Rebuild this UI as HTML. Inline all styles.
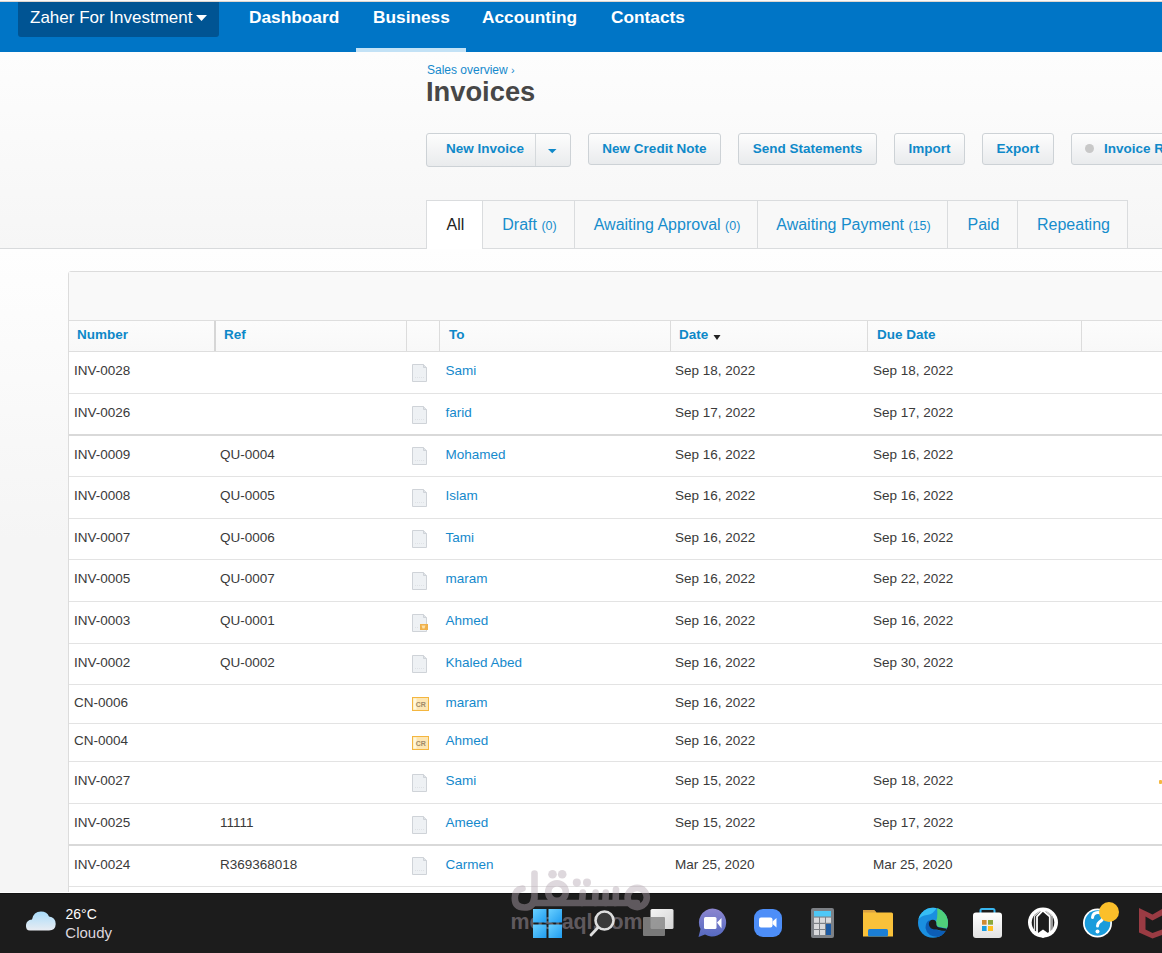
<!DOCTYPE html>
<html><head><meta charset="utf-8">
<style>
*{margin:0;padding:0;box-sizing:border-box}
html,body{width:1162px;height:953px;overflow:hidden;background:#fdfdfd;font-family:"Liberation Sans",sans-serif;position:relative}
.a{position:absolute;white-space:nowrap}
#topline{left:0;top:0;width:1162px;height:2px;background:linear-gradient(#fafafa 0,#fafafa 50%,#ddd5cf 50%)}
#nav{left:0;top:2px;width:1162px;height:50px;background:#0075c6}
#org{left:18px;top:2px;width:201px;height:35px;background:#005493;border-radius:0 0 3px 3px}
.navt{color:#fff;font-size:17px;line-height:20px;top:8px}
.navb{font-size:17.3px}
.navb{font-weight:bold;font-size:17.3px;margin-top:-0.6px}
#uline{left:356px;top:48px;width:110px;height:4px;background:#c3e2f6}
#hdr{left:0;top:52px;width:1162px;height:197px;background:linear-gradient(#fdfdfd,#f6f6f6)}
#hline{left:0;top:248px;width:1162px;height:1px;background:#d8dadc}
#gutter{left:0;top:249px;width:1162px;height:644px;background:linear-gradient(#fefefe 0,#f5f5f5 45%,#f5f5f5 100%)}
.crumb{left:427px;top:63px;font-size:12px;color:#1589cc}
#title{left:426px;top:77px;font-size:27.3px;font-weight:bold;color:#474747;line-height:30px}
.btn{position:absolute;top:133px;height:32px;border:1px solid #cdd2d6;border-radius:3px;background:linear-gradient(#fdfdfd,#e9ebed);color:#0f89c9;font-size:13.5px;font-weight:bold;line-height:30px;text-align:center;white-space:nowrap}
.tab{position:absolute;top:200px;height:49px;border:1px solid #dadcde;border-left:none;background:#f8f8f8;color:#178dcc;font-size:16px;line-height:47px;text-align:center;white-space:nowrap;text-indent:2px}
.tab small{font-size:12.5px}

#panel{left:68px;top:271px;width:1100px;height:630px;border:1px solid #dcdcdc;border-radius:3px 0 0 0;background:#fff}
#ptool{left:69px;top:272px;width:1093px;height:48px;background:#f9f9f9}
#thead{left:69px;top:320px;width:1093px;height:32px;border-top:1px solid #dedede;border-bottom:1px solid #dedede;background:linear-gradient(#fcfcfc,#f8f8f8)}
.th{position:absolute;top:327.4px;font-size:13.5px;font-weight:bold;color:#0d88c8;line-height:16px;white-space:nowrap}
.vd{position:absolute;top:321px;width:1px;height:30px;background:#dcdcdc}
.td{position:absolute;font-size:13.5px;color:#3a3a3a;line-height:16px;white-space:nowrap}
.lk{color:#1589cc}
.rl{left:69px;width:1093px;height:1px;background:#e3e3e3}
#taskbar{left:0;top:893px;width:1162px;height:60px;background:#1c1c1c;border-top:1px solid #121212}
#wrow{left:0;top:892px;width:1162px;height:1px;background:#fdfdfd}
</style></head><body>
<div class="a" id="topline"></div>
<div class="a" id="nav"></div>
<div class="a" id="org"></div>
<div class="a navt" style="left:30px">Zaher For Investment</div>
<svg class="a" style="left:196px;top:15px" width="11" height="6"><path d="M0 0H11L5.5 6Z" fill="#fff"/></svg>
<div class="a navt navb" style="left:249px">Dashboard</div>
<div class="a navt navb" style="left:373px">Business</div>
<div class="a navt navb" style="left:482px">Accounting</div>
<div class="a navt navb" style="left:611px">Contacts</div>
<div class="a" id="uline"></div>

<div class="a" id="hdr"></div>
<div class="a" id="gutter"></div>
<div class="a" id="hline"></div>
<div class="a crumb">Sales overview <span style="font-size:11px">›</span></div>
<div class="a" id="title">Invoices</div>

<div class="btn" style="left:426px;width:145px;height:34px"><span style="position:absolute;left:19px;top:0">New Invoice</span><span style="position:absolute;left:108px;top:0;width:1px;height:32px;background:#d5d9dc"></span><svg style="position:absolute;left:121px;top:15px" width="9" height="5"><path d="M0 0H8.5L4.25 4.2Z" fill="#0f89c9"/></svg></div>
<div class="btn" style="left:588px;width:133px">New Credit Note</div>
<div class="btn" style="left:738px;width:139px">Send Statements</div>
<div class="btn" style="left:894px;width:71px">Import</div>
<div class="btn" style="left:982px;width:72px">Export</div>
<div class="btn" style="left:1071px;width:120px;text-align:left"><span style="position:absolute;left:13px;top:10px;width:9px;height:9px;border-radius:50%;background:#c8c8c8"></span><span style="position:absolute;left:32px;top:0">Invoice Reminders</span></div>

<div class="tab" style="left:426px;width:57px;border-left:1px solid #dadcde;background:#fff;color:#222;border-bottom:none;height:49px">All</div>
<div class="tab" style="left:483px;width:92px">Draft <small>(0)</small></div>
<div class="tab" style="left:575px;width:183px">Awaiting Approval <small>(0)</small></div>
<div class="tab" style="left:758px;width:190px">Awaiting Payment <small>(15)</small></div>
<div class="tab" style="left:948px;width:70px">Paid</div>
<div class="tab" style="left:1018px;width:110px">Repeating</div>


<svg width="0" height="0" style="position:absolute">
<defs>
<g id="doc"><path d="M0.5 0.5H11.5L14.5 3.5V17.5H0.5Z" fill="#eef1f4" stroke="#cfd3d8"/><path d="M11.5 0.5V3.5H14.5" fill="#dfe3e7" stroke="#cfd3d8"/><path d="M3 13.5H12" stroke="#dfe2e6" stroke-dasharray="1 1"/></g>
<g id="docb"><path d="M0.5 0.5H11.5L14.5 3.5V17.5H0.5Z" fill="#eef1f4" stroke="#cfd3d8"/><path d="M11.5 0.5V3.5H14.5" fill="#dfe3e7" stroke="#cfd3d8"/><path d="M3 13.5H7" stroke="#dfe2e6" stroke-dasharray="1 1"/><rect x="8" y="10" width="8" height="6" fill="#efb14c"/><path d="M9.5 11.5H13.5L12.5 14.5H10.5Z" fill="#fde0a6"/></g>
<g id="cr"><rect x="0.5" y="0.5" width="16" height="13" fill="#fde6b3" stroke="#f4b63f"/><rect x="1.5" y="1.5" width="3" height="11" fill="#fff8dc"/><text x="8.8" y="10" font-family="Liberation Sans" font-weight="bold" font-size="7" fill="#a08a6a" text-anchor="middle">CR</text></g>
</defs></svg>
<div class="a" id="panel"></div>
<div class="a" id="ptool"></div>
<div class="a" id="thead"></div>
<div class="vd" style="left:214px;background:#d6d6d6;width:2px"></div>
<div class="vd" style="left:406px"></div>
<div class="vd" style="left:439px"></div>
<div class="vd" style="left:670px"></div>
<div class="vd" style="left:867px"></div>
<div class="vd" style="left:1081px"></div>
<div class="th" style="left:77px">Number</div>
<div class="th" style="left:224px">Ref</div>
<div class="th" style="left:449px">To</div>
<div class="th" style="left:679px">Date</div>
<svg class="a" style="left:713px;top:335px" width="8" height="5"><path d="M0.5 0H7.5L4 5Z" fill="#222"/></svg>
<div class="th" style="left:877px">Due Date</div>
<div class="td" style="left:74px;top:363.22px">INV-0028</div>
<div class="td lk" style="left:445.5px;top:363.22px">Sami</div>
<div class="td" style="left:675px;top:363.22px">Sep 18, 2022</div>
<div class="td" style="left:873px;top:363.22px">Sep 18, 2022</div>
<svg class="a" style="left:412px;top:364px" width="17" height="19"><use href="#doc"/></svg>
<div class="td" style="left:74px;top:405.22px">INV-0026</div>
<div class="td lk" style="left:445.5px;top:405.22px">farid</div>
<div class="td" style="left:675px;top:405.22px">Sep 17, 2022</div>
<div class="td" style="left:873px;top:405.22px">Sep 17, 2022</div>
<svg class="a" style="left:412px;top:406px" width="17" height="19"><use href="#doc"/></svg>
<div class="td" style="left:74px;top:446.72px">INV-0009</div>
<div class="td" style="left:220px;top:446.72px">QU-0004</div>
<div class="td lk" style="left:445.5px;top:446.72px">Mohamed</div>
<div class="td" style="left:675px;top:446.72px">Sep 16, 2022</div>
<div class="td" style="left:873px;top:446.72px">Sep 16, 2022</div>
<svg class="a" style="left:412px;top:447px" width="17" height="19"><use href="#doc"/></svg>
<div class="td" style="left:74px;top:488.22px">INV-0008</div>
<div class="td" style="left:220px;top:488.22px">QU-0005</div>
<div class="td lk" style="left:445.5px;top:488.22px">Islam</div>
<div class="td" style="left:675px;top:488.22px">Sep 16, 2022</div>
<div class="td" style="left:873px;top:488.22px">Sep 16, 2022</div>
<svg class="a" style="left:412px;top:489px" width="17" height="19"><use href="#doc"/></svg>
<div class="td" style="left:74px;top:529.72px">INV-0007</div>
<div class="td" style="left:220px;top:529.72px">QU-0006</div>
<div class="td lk" style="left:445.5px;top:529.72px">Tami</div>
<div class="td" style="left:675px;top:529.72px">Sep 16, 2022</div>
<div class="td" style="left:873px;top:529.72px">Sep 16, 2022</div>
<svg class="a" style="left:412px;top:530px" width="17" height="19"><use href="#doc"/></svg>
<div class="td" style="left:74px;top:571.22px">INV-0005</div>
<div class="td" style="left:220px;top:571.22px">QU-0007</div>
<div class="td lk" style="left:445.5px;top:571.22px">maram</div>
<div class="td" style="left:675px;top:571.22px">Sep 16, 2022</div>
<div class="td" style="left:873px;top:571.22px">Sep 22, 2022</div>
<svg class="a" style="left:412px;top:572px" width="17" height="19"><use href="#doc"/></svg>
<div class="td" style="left:74px;top:613.22px">INV-0003</div>
<div class="td" style="left:220px;top:613.22px">QU-0001</div>
<div class="td lk" style="left:445.5px;top:613.22px">Ahmed</div>
<div class="td" style="left:675px;top:613.22px">Sep 16, 2022</div>
<div class="td" style="left:873px;top:613.22px">Sep 16, 2022</div>
<svg class="a" style="left:412px;top:614px" width="17" height="19"><use href="#docb"/></svg>
<div class="td" style="left:74px;top:654.72px">INV-0002</div>
<div class="td" style="left:220px;top:654.72px">QU-0002</div>
<div class="td lk" style="left:445.5px;top:654.72px">Khaled Abed</div>
<div class="td" style="left:675px;top:654.72px">Sep 16, 2022</div>
<div class="td" style="left:873px;top:654.72px">Sep 30, 2022</div>
<svg class="a" style="left:412px;top:655px" width="17" height="19"><use href="#doc"/></svg>
<div class="td" style="left:74px;top:694.72px">CN-0006</div>
<div class="td lk" style="left:445.5px;top:694.72px">maram</div>
<div class="td" style="left:675px;top:694.72px">Sep 16, 2022</div>
<svg class="a" style="left:412px;top:697px" width="18" height="15"><use href="#cr"/></svg>
<div class="td" style="left:74px;top:733.22px">CN-0004</div>
<div class="td lk" style="left:445.5px;top:733.22px">Ahmed</div>
<div class="td" style="left:675px;top:733.22px">Sep 16, 2022</div>
<svg class="a" style="left:412px;top:736px" width="18" height="15"><use href="#cr"/></svg>
<div class="td" style="left:74px;top:773.22px">INV-0027</div>
<div class="td lk" style="left:445.5px;top:773.22px">Sami</div>
<div class="td" style="left:675px;top:773.22px">Sep 15, 2022</div>
<div class="td" style="left:873px;top:773.22px">Sep 18, 2022</div>
<svg class="a" style="left:412px;top:774px" width="17" height="19"><use href="#doc"/></svg>
<div class="td" style="left:74px;top:815.22px">INV-0025</div>
<div class="td" style="left:220px;top:815.22px">11111</div>
<div class="td lk" style="left:445.5px;top:815.22px">Ameed</div>
<div class="td" style="left:675px;top:815.22px">Sep 15, 2022</div>
<div class="td" style="left:873px;top:815.22px">Sep 17, 2022</div>
<svg class="a" style="left:412px;top:816px" width="17" height="19"><use href="#doc"/></svg>
<div class="td" style="left:74px;top:856.72px">INV-0024</div>
<div class="td" style="left:220px;top:856.72px">R369368018</div>
<div class="td lk" style="left:445.5px;top:856.72px">Carmen</div>
<div class="td" style="left:675px;top:856.72px">Mar 25, 2020</div>
<div class="td" style="left:873px;top:856.72px">Mar 25, 2020</div>
<svg class="a" style="left:412px;top:857px" width="17" height="19"><use href="#doc"/></svg>
<div class="a rl" style="top:393px"></div>
<div class="a rl" style="top:434px;height:2px;background:#d9d9d9"></div>
<div class="a rl" style="top:476px"></div>
<div class="a rl" style="top:518px"></div>
<div class="a rl" style="top:559px"></div>
<div class="a rl" style="top:601px"></div>
<div class="a rl" style="top:643px"></div>
<div class="a rl" style="top:684px"></div>
<div class="a rl" style="top:723px"></div>
<div class="a rl" style="top:761px"></div>
<div class="a rl" style="top:803px"></div>
<div class="a rl" style="top:844px;height:2px;background:#d9d9d9"></div>
<div class="a rl" style="top:886px"></div>
<div class="a" id="wrow"></div><div class="a" id="taskbar"></div>
<svg class="a" style="left:500px;top:862px" width="160" height="75" viewBox="500 862 160 75">
<g opacity="0.44">
<g stroke="#b6a8b2" stroke-width="6.6" fill="none" stroke-linecap="round" stroke-linejoin="round">
<path d="M534.5 873.5 V898"/><path d="M534 899 Q533 907.5 524.5 907.5 Q514.8 907.5 514.8 898 Q514.8 889.5 522.5 888.5"/>
<path d="M534.5 903 H637"/>
<circle cx="557" cy="892" r="8.8"/>
<path d="M582 903 L582.8 892.5 M595 903 L595.6 892.5 M605.3 903 L605.8 892.5 M615.6 903 L616 889.5"/>
<circle cx="637.2" cy="897.5" r="9.6"/>
</g>
<g fill="#b6a8b2">
<circle cx="552.5" cy="874.3" r="4.3"/><circle cx="562.2" cy="874.3" r="4.3"/>
<circle cx="576.8" cy="882.5" r="4"/><circle cx="587" cy="882.5" r="4"/>
<text x="510.5" y="929" font-family="Liberation Sans" font-weight="bold" font-size="22.5" textLength="132" lengthAdjust="spacingAndGlyphs">mostaql.com</text>
</g></g>
</svg>
<svg class="a" style="left:0;top:893px" width="1162" height="60" viewBox="0 893 1162 60">
<defs>
<linearGradient id="gcloud" x1="0" y1="0" x2="0" y2="1"><stop offset="0" stop-color="#a9dcfb"/><stop offset="1" stop-color="#e8ecf2"/></linearGradient>
<linearGradient id="gwin" x1="0" y1="0" x2="1" y2="1"><stop offset="0" stop-color="#6ad0ff"/><stop offset="1" stop-color="#1f9cf0"/></linearGradient>
<linearGradient id="gmeet" x1="0" y1="0" x2="0" y2="1"><stop offset="0" stop-color="#8c86d0"/><stop offset="1" stop-color="#5569c0"/></linearGradient>
<linearGradient id="gtv" x1="0" y1="0" x2="1" y2="1"><stop offset="0" stop-color="#f4f4f4"/><stop offset="1" stop-color="#d4d4d4"/></linearGradient>
<linearGradient id="gbag" x1="0" y1="0" x2="0" y2="1"><stop offset="0" stop-color="#ffffff"/><stop offset="1" stop-color="#e2e2e2"/></linearGradient>
</defs>
<!-- cloud -->
<path d="M30 930.5 Q25.5 930.5 26 925 Q26.5 920 32 919.5 Q33.5 911.5 41 911.5 Q47 911.5 49 916.5 Q55.5 917 55.7 924 Q55.5 930.5 49 930.5Z" fill="url(#gcloud)"/>
<text x="65.5" y="918.8" font-family="Liberation Sans" font-size="14" fill="#ffffff">26°C</text>
<text x="65.3" y="938.3" font-family="Liberation Sans" font-size="15" fill="#dcd6de">Cloudy</text>
<!-- windows -->
<rect x="533" y="909" width="13.5" height="13.5" fill="url(#gwin)"/>
<rect x="548.5" y="909" width="13.5" height="13.5" fill="url(#gwin)"/>
<rect x="533" y="924.5" width="13.5" height="13.5" fill="url(#gwin)"/>
<rect x="548.5" y="924.5" width="13.5" height="13.5" fill="url(#gwin)"/>
<!-- search -->
<circle cx="604.5" cy="920.5" r="9" fill="#3a3a3a" stroke="#dedede" stroke-width="2.6"/>
<path d="M598 927.5 L591 935" stroke="#dedede" stroke-width="2.8" stroke-linecap="round"/>
<!-- task view -->
<rect x="650.5" y="909" width="23" height="20" rx="1.5" fill="url(#gtv)"/>
<rect x="643" y="917" width="22" height="19" rx="1" fill="#8a8a8a" opacity="0.85"/>
<!-- meet -->
<path d="M712.5 908.5 A14 14 0 1 1 705 934.5 L698.5 937 L700.5 929 A14 14 0 0 1 712.5 908.5Z" fill="url(#gmeet)"/>
<rect x="704" y="917" width="12.5" height="12" rx="1.5" fill="#fff"/>
<path d="M717 922.5 L721.5 918 V928.5 Z" fill="#fff"/>
<!-- zoom -->
<rect x="754" y="909" width="28" height="28" rx="9" fill="#4d8ef8"/>
<rect x="759" y="917.5" width="13.5" height="10" rx="2" fill="#fff"/>
<path d="M772.5 921.5 L776.5 918 V927.5 L772.5 924Z" fill="#fff"/>
<!-- calculator -->
<rect x="811" y="908" width="23" height="30" rx="2" fill="#7d8186"/>
<rect x="814" y="911" width="17" height="5.5" fill="#4ec8f6"/>
<rect x="814" y="917.6" width="5" height="5.2" fill="#d9dadc"/><rect x="820" y="917.6" width="5" height="5.2" fill="#d9dadc"/><rect x="826" y="917.6" width="5" height="5.2" fill="#d9dadc"/>
<rect x="814" y="924" width="5" height="5" fill="#d9dadc"/><rect x="820" y="924" width="5" height="5" fill="#d9dadc"/>
<rect x="814" y="930" width="5" height="5" fill="#d9dadc"/><rect x="820" y="930" width="5" height="5" fill="#d9dadc"/>
<rect x="826" y="924" width="5" height="11" fill="#1e5ba3"/>
<!-- folder -->
<path d="M863 911.5 Q863 910 864.5 910 H874 L876.5 912.5 H891.5 Q893 912.5 893 914 V936.5 H863Z" fill="#f9c13a"/>
<path d="M863 910 H874 L876.5 912.5 H863Z" fill="#d9a040"/>
<rect x="868" y="929" width="20" height="7.5" rx="1.5" fill="#1b7fd6"/>
<!-- edge -->
<clipPath id="cedge"><circle cx="933" cy="922.8" r="15"/></clipPath>
<g clip-path="url(#cedge)">
<rect x="917" y="907" width="32" height="32" fill="#1a8fe0"/>
<path d="M917 907 H937 Q934 914 927 915 Q920 916 917 921Z" fill="#36bef5"/>
<path d="M929.5 920 Q925.5 922 925.5 928 Q927 936.5 938 937 L949 939 V930.5 L946 931 Q940 931.5 936.5 929.5 Q929.5 928.5 929.5 920Z" fill="#0c5db6"/>
<path d="M937 907.5 A15 15 0 0 1 947.5 928.5 L938 926.8 Q935.5 924.5 936.2 921 Q938 917 937 907.5Z" fill="#4fd07a"/>
<path d="M936.5 929.5 Q929 929.5 928.8 924 Q928.8 920 932.8 919.8 Q936.3 920 936.3 923 Q936 926.5 938.5 927.3 L948 929 L947.5 931 Q941 931 936.5 929.5Z" fill="#1c1c1c"/>
</g>
<!-- store -->
<path d="M980.5 914 V910.5 Q980.5 909 982 909 H993 Q994.5 909 994.5 910.5 V914" fill="none" stroke="#38b6f0" stroke-width="2"/>
<rect x="973" y="912.6" width="29" height="25.4" rx="3" fill="url(#gbag)"/>
<rect x="982" y="920" width="4.6" height="4.7" fill="#d08a32"/><rect x="988" y="920" width="5" height="4.7" fill="#8aa83c"/>
<rect x="982" y="926" width="4.6" height="5" fill="#1a9ce0"/><rect x="988" y="926" width="5" height="5" fill="#ffc020"/>
<!-- circle app -->
<circle cx="1043" cy="922.6" r="15" fill="#fff"/>
<circle cx="1043" cy="922.6" r="11.3" fill="#1c1c1c"/>
<path d="M1037 933 V916.5 L1042.8 910.5 L1049.8 916.5 V933" fill="none" stroke="#fff" stroke-width="1.8"/>
<path d="M1034.5 930 V916 L1040 911" fill="none" stroke="#d8d8d8" stroke-width="1.3"/>
<path d="M1052 930 V916 L1046 911" fill="none" stroke="#d8d8d8" stroke-width="1.3"/>
<path d="M1036 934.5 L1043 929.5 L1050 934.5 L1043 938Z" fill="#fff"/>
<!-- help -->
<circle cx="1097.5" cy="923" r="14.5" fill="#fff"/>
<circle cx="1097.5" cy="923" r="12.8" fill="#1a9cdc"/>
<path d="M1092.5 917.5 Q1093 912.5 1098 912.5 Q1103 912.5 1103 917 Q1103 920 1099.5 922 Q1097.5 923.5 1097.5 926" fill="none" stroke="#fff" stroke-width="3" stroke-linecap="round"/>
<circle cx="1097.5" cy="931.5" r="2" fill="#fff"/>
<circle cx="1109" cy="912" r="10" fill="#fbbf2a"/>
<!-- mcafee -->
<path d="M1139 908 L1152.5 914.5 L1162 909 V935 L1152.5 938.5 L1139 932.5Z" fill="#9a3b43"/>
<path d="M1145.5 916.5 L1152.5 920.5 L1162 915.5 V929.5 L1152.5 933 L1145.5 929.5Z" fill="#1c1c1c"/>
</svg>

<div class="a" style="left:1159px;top:780px;width:3px;height:4px;background:#f5b840;border-radius:1px"></div>

</body></html>
